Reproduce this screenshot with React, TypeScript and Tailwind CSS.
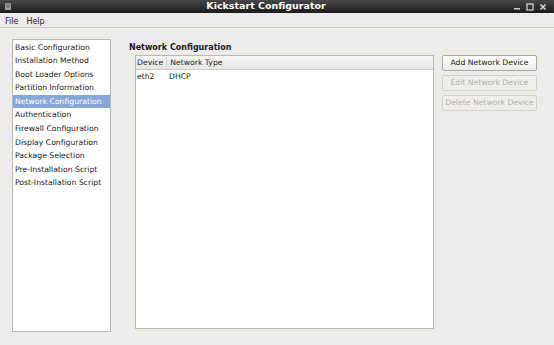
const sections = [
  'Basic Configuration',
  'Installation Method',
  'Boot Loader Options',
  'Partition Information',
  'Network Configuration',
  'Authentication',
  'Firewall Configuration',
  'Display Configuration',
  'Package Selection',
  'Pre-Installation Script',
  'Post-Installation Script',
];

const font = { fontFamily: '"DejaVu Sans", "Noto Sans", sans-serif' };

function WindowButtons() {
  return (
    <div className="flex items-center gap-[5px] pr-[3px]">
      <svg width="8" height="8" viewBox="0 0 8 8">
        <rect x="1" y="5" width="6" height="1.5" fill="#cfcfcf" />
      </svg>
      <svg width="8" height="8" viewBox="0 0 8 8">
        <rect x="1" y="1" width="6" height="6" fill="none" stroke="#cfcfcf" strokeWidth="1.3" />
      </svg>
      <svg width="8" height="8" viewBox="0 0 8 8">
        <path d="M1.5 1.5 L6.5 6.5 M6.5 1.5 L1.5 6.5" stroke="#d8d8d8" strokeWidth="1.5" />
      </svg>
    </div>
  );
}

export default function App() {
  return (
    <div
      className="w-[554px] h-[345px] flex flex-col bg-[#edeceb] text-[7.7px] text-[#1a1a1a] overflow-hidden"
      style={font}
    >
      <div className="h-[13px] flex items-center justify-between bg-gradient-to-b from-[#474747] to-[#1c1c1c] px-[4px]">
        <svg width="9" height="9" viewBox="0 0 9 9">
          <rect x="1" y="1" width="6" height="7" rx="1" fill="#9a9a9a" />
          <rect x="2.5" y="2.5" width="3" height="1" fill="#555" />
          <rect x="2.5" y="4.5" width="3" height="1" fill="#555" />
        </svg>
        <div className="font-bold text-[9.5px] text-white ml-[6px]">Kickstart Configurator</div>
        <WindowButtons />
      </div>
      <div className="h-[15px] flex items-center gap-[8px] px-[5px] pt-[4px] text-[8px] border-b border-[#cfcdca]">
        <span>File</span>
        <span>Help</span>
      </div>
      <div className="flex-1 flex px-[12px] pt-[11px] pb-[12px]">
        <div className="w-[99px] h-[293px] bg-white border border-[#b9b7b4] pt-[0.5px]">
          {sections.map((s) => (
            <div
              key={s}
              className={`h-[13.6px] pl-[2px] flex items-center whitespace-nowrap ${
                s === 'Network Configuration' ? 'bg-[#86a7d6] text-white' : ''
              }`}
            >
              {s}
            </div>
          ))}
        </div>
        <div className="ml-[19px] flex flex-col">
          <div className="font-bold h-[16px] flex items-center pt-[2px] -ml-[1px] text-[8px]">Network Configuration</div>
          <div className="ml-[5px] w-[299px] h-[274px] bg-white border border-[#b9b7b4] flex flex-col">
            <div className="h-[14px] flex items-center bg-gradient-to-b from-[#f7f7f6] to-[#e7e6e4] border-b border-[#cfcdca]">
              <span className="pl-[1px] pr-[3px] border-r border-[#d6d4d1]">Device</span>
              <span className="pl-[3px]">Network Type</span>
            </div>
            <div className="h-[14px] flex items-center">
              <span className="pl-[1px] w-[33px]">eth2</span>
              <span>DHCP</span>
            </div>
          </div>
        </div>
        <div className="ml-[8px] flex flex-col gap-[4px] mt-[16px]">
          <button className="w-[95px] h-[16px] whitespace-nowrap border border-[#a9a7a4] rounded-[2px] bg-gradient-to-b from-white to-[#ecebe9] text-[#1a1a1a]">
            Add Network Device
          </button>
          <button className="w-[95px] h-[16px] whitespace-nowrap border border-[#d3d1ce] rounded-[2px] bg-[#efeeec] text-[#b0aeab]">
            Edit Network Device
          </button>
          <button className="w-[95px] h-[16px] whitespace-nowrap border border-[#d3d1ce] rounded-[2px] bg-[#efeeec] text-[#b0aeab]">
            Delete Network Device
          </button>
        </div>
      </div>
    </div>
  );
}
